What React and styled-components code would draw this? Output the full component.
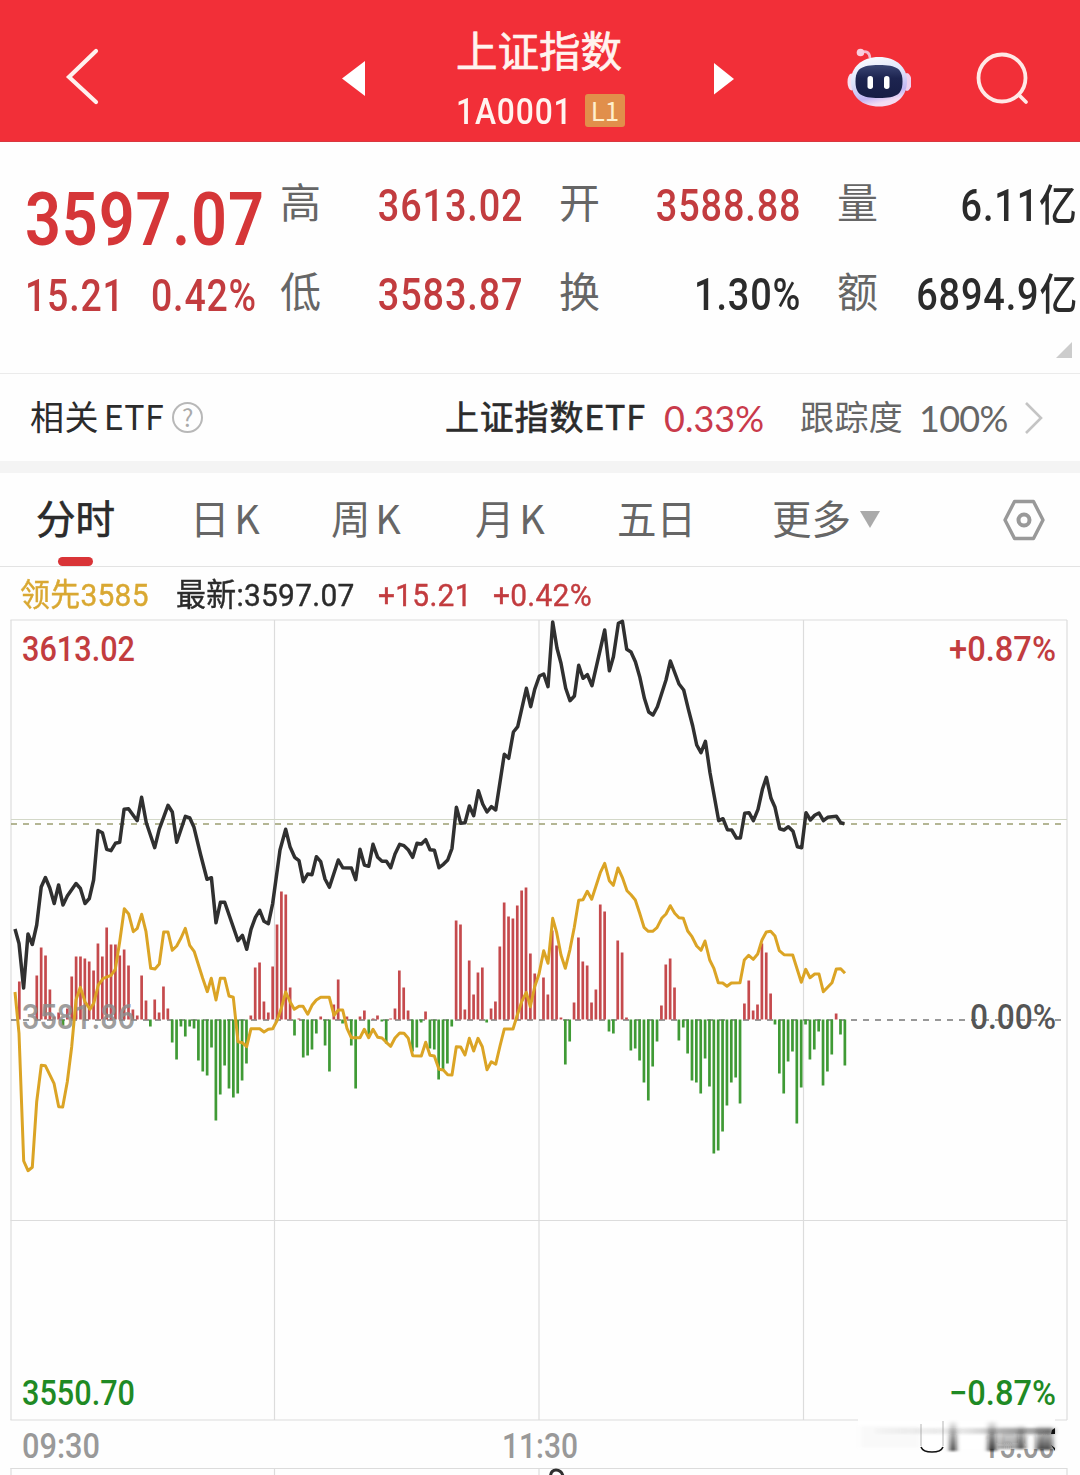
import styled, { createGlobalStyle } from 'styled-components'

const RED = '#c23c3f'
const GREEN = '#1f8a24'

const STATS = [
    { label: '高', value: '3613.02', color: RED },
    { label: '开', value: '3588.88', color: RED },
    { label: '量', value: '6.11亿', color: '#2b2b2b' },
    { label: '低', value: '3583.87', color: RED },
    { label: '换', value: '1.30%', color: '#2b2b2b' },
    { label: '额', value: '6894.9亿', color: '#2b2b2b' },
]

const TABS = ['分时', '日 K', '周 K', '月 K', '五日', '更多']

// index line, x and y in chart units
const PRICE = `15,929 19,943.5 23.6,988 28,934 32.3,944.5 36.7,925 41.2,887 45.4,877.5 49.8,888 54.2,903.5
58.6,885 63,905 67.3,896 76,883.5 80.4,888.5 85,903.5 89.3,898.5 93.6,880 98,830.5 102.4,832.7 106.7,849.3
111,850.7 115.4,843.3 119.7,842.3 124.1,809.3 128.5,808.7 137.2,820.7 141.6,797.3 146.3,822.7 154.7,847.7
159.2,829.3 168,805.3 172.3,812 176.7,842.3 185.4,816.3 189.8,818 194,827.3 200.7,855 207,879.3 211.4,877.7
216,922.7 220.4,902.3 224.7,902.3 238,940.7 242.4,935.3 246.7,949.3 251,929.3 255.4,917.3 259.7,910.3
264,921.3 268.4,923.7 272.7,903.3 280,850 285.7,829.3 290,846.7 294.7,857.3 299,860.7 303.3,881.7 307.7,874
312,874.7 316.4,856.7 320.7,861.7 325,879 329.4,887.3 338.3,860 342.7,867.7 351.4,868 355.7,879.7 360,849.3
364.4,865 368.7,866.3 373,844.3 377.7,857.3 382,861.3 386.4,861.3 390.7,867.7 395,854 399.7,844.3 404,845.7
408.4,850 412.7,857.3 417,843.3 421.4,844 425.7,839.7 430,849.7 434.4,850.3 439,867.7 443.4,864.3 447.7,860
452,848.3 456.4,807.3 460.7,823.3 465,822.7 469.4,806 473.7,815.7 478.4,790.7 482.7,804 487,812 491.4,806.7
495.7,810 504.3,754.3 508.7,758.3 513.4,732 517.7,726.7 526.4,688.3 530.7,706.7 534.7,689.3 539.4,676
543.7,674 548,686.7 552.7,622 557,648.3 561,663.3 565.7,688.3 570,700.7 574.4,696 578.7,665.3 583,678.3
587.4,674.7 592,685.7 604.7,630 609.4,670.7 613.4,656.7 618.4,623.3 622.4,621.3 626.7,649.3 631,652
635.4,661.7 639.7,676.7 644.4,698.3 648.7,712 653,715 657.4,706.7 666,680 670.4,661 679,684 683.7,690
688.4,709.3 692.7,726 696.7,745 701,752.7 705.4,741.3 710,772.7 718.7,820.7 723,818.7 727.4,829.7 731.7,830
736.4,838 740.4,838 744.7,813.3 749,812.7 753.4,820.7 758,809.3 762.4,789.3 766.4,777.3 771,798.3 775,807.3
779.7,828.7 784,830 788.4,826.7 793,831.3 797.4,846.7 801.7,847.7 806,812.7 810.4,820 814.7,815.3 819,813
823.4,820.7 827.7,817.3 836.4,816.3 840.7,822.7 844.4,823.7`

const LEAD = `15,992 19,1033.3 23.7,1161 28,1170.7 32.3,1167.3 36.7,1101.7 41.3,1065.3 45.3,1065.7 54,1083.3
58.7,1106.7 62.7,1107 67.3,1081.7 71.7,1046.7 76,1000 80.3,987.3 85,1001.7 90,1009.3 93.7,1003.3 98.3,985
103.3,978.3 111,975.3 115.3,969.3 119.7,941.7 124.3,908.7 128.7,914 133.3,931.7 137.3,928.3 141.7,914.3
146,931.7 150.7,968.3 155,969 159.3,964 163.7,932 168,932 172.3,950.3 176.7,946 181,938 185.3,928.3
189.7,945.3 194.3,951.7 202.7,978.3 207.3,991.7 211.3,978.3 216,1000 220.3,978.3 224.7,978.3 229,996
233.3,997.3 238,1041.7 242.3,1042.7 246.7,1046.7 251,1028.7 259.7,1028.7 264,1032 268.3,1029.3 272.7,1028.7
277,1020.7 281.3,1008.3 285.7,992 290,1001.7 294.3,1009.3 299,1006.3 303,1006.3 307.7,1014.3 312,1005.3
316.3,1000 320.7,997.3 329.3,997.3 334,1015.3 338.3,1010 342.7,1010 347,1028.3 351.3,1037.7 360,1037.7
364.3,1029.3 368.7,1037.7 373,1029.3 377.7,1037.3 382,1038 386.3,1042.3 390.7,1046.3 395,1038 399.7,1033
404,1033.3 408.3,1038.3 412.7,1055.7 421.3,1056 425.7,1042.3 430,1055.3 434.3,1056 439,1069.3 443.3,1070
447.7,1074.7 452,1075 456.3,1046.7 460.7,1047 465,1055 469.3,1038.3 473.7,1051 478,1038.3 482.3,1046.7
487,1069.7 491.3,1061.7 495.7,1064.3 500,1046 504.3,1029 513,1029 517.3,1015 521.7,1001.7 526.3,992.3
530.3,1006.7 534.7,986.7 539,974 543.7,950.7 548,963.3 552.7,918.3 556.7,932.7 561,955 565.3,968.3 570,949.3
574.3,927.3 578.7,900.3 583,899.7 587.3,891.3 591.7,899.3 600.3,872.7 604.7,863.3 609.3,880.7 613.3,885.3
618,868 622.3,877.3 627,890.7 631,894.7 635.3,900 639.7,913.3 644,927.3 648.3,931.3 652.7,931.3 657,927.7
661.7,918.3 666,914 670.3,905.7 674.7,913.3 679,917.7 683.3,918.3 687.7,931 692,936.7 696.7,946 701,950.3
705,941 709.7,960 714,968.7 718.3,982.7 722.7,983 727,986.3 731.3,983 740,982.7 744.3,960 748.7,955.3
753.3,959.3 757.7,954 762,940 766.3,932 770.7,931.3 775,936 779.3,950.7 784,954.7 792.7,955 801.3,982.3
805.7,969.3 810,977.7 814.7,974 819,974 823.3,991.7 832,982.7 836.3,969 840.7,968.7 845,973.3`

// one bar per minute, above or below the zero line
const BARS = [
    0, 38, 0, 0, 0, 44, 72, 64, 30, 3, 7, -6, 11, 43, 63, 63, 61, 58, 49, 76, 63, 92, 75, 75, 64, 70, 54, 10, 4, 44,
    19, -7, 20, 7, 33, 11, -23, -40, -7, -17, -7, -9, -41, -52, -56, -28, -101, -75, -46, -69, -78, -74, -61, -44, 4,
    52, 57, 18, 7, 53, 95, 128, 125, 32, -16, 1, -38, -36, -30, -14, 3, -26, -52, 15, 40, -4, 3, -26, -69, 3, 9, -17,
    1, 4, -2, -24, 1, 11, 49, 32, 9, -32, -28, -3, 8, -29, -30, -60, -51, -44, -7, 99, 95, 10, 59, 25, 47, 52, -3, 11,
    18, 73, 117, 103, 101, 114, 129, 132, 66, 46, 0, 42, 25, 89, 74, 2, -45, -22, 17, 82, 58, 54, 17, 30, 115, 108,
    -12, -14, 79, 67, 2, -31, -29, -41, -63, -81, -47, -22, 14, 55, 61, 32, -21, -8, -34, -61, -63, -74, -39, -67,
    -134, -131, -112, -86, -63, -58, -84, 16, 39, 9, 15, 76, 67, 26, -5, -54, -74, -42, -32, -104, -68, -5, -40, -30,
    -12, -66, -52, -35, 6, -15, -46,
]

const ZERO = 1019.5

const Robot = () => (
    <svg width='64' height='60' viewBox='847 47 64 60'>
        <defs>
            <linearGradient id='shell' x1='0' y1='0' x2='0.3' y2='1'>
                <stop offset='0' stopColor='#fff' />
                <stop offset='0.5' stopColor='#dde4fb' />
                <stop offset='0.85' stopColor='#c3b5f3' />
                <stop offset='1' stopColor='#f3dcf2' />
            </linearGradient>
            <linearGradient id='face' x1='0' y1='0' x2='0' y2='1'>
                <stop offset='0' stopColor='#3a4674' />
                <stop offset='0.4' stopColor='#1d2450' />
                <stop offset='1' stopColor='#171d45' />
            </linearGradient>
        </defs>
        <path d='M861 51.5 C866 49.500 869.500 51 870 57' fill='none' stroke='#f5b9cc' strokeWidth='2.6' />
        <circle cx='860.500' cy='51.500' r='3.800' fill='#f9cddd' />
        <ellipse cx='851.500' cy='81' rx='4' ry='8.500' fill='#f7dff0' />
        <ellipse cx='907' cy='81' rx='4.500' ry='9' fill='#efd0ee' />
        <path d='M879 56 C896 56 907 66 907 80 C907 96 896 105.500 879 105.500 C862 105.500 851 96 851 80 C851 66 862 56 879 56Z' fill='url(#shell)' />
        <path d='M879 64 C897 64 902.500 68 902.500 80.500 C902.500 93 897 97 879 97 C861 97 855.500 93 855.500 80.500 C855.500 68 861 64 879 64Z' fill='url(#face)' />
        <rect x='867.500' y='75' width='5.500' height='13' rx='2.700' fill='#fff' />
        <rect x='884' y='75' width='5.500' height='13' rx='2.700' fill='#fff' />
    </svg>
)

const Chart = () => (
    <ChartSvg viewBox='0 619 1080 856'>
        <defs>
            <filter id='soft' x='-20%' y='-20%' width='140%' height='140%'>
                <feGaussianBlur stdDeviation='2.4 1.2' />
            </filter>
            <linearGradient id='fade' x1='0' y1='0' x2='0' y2='1'>
                <stop offset='0' stopColor='#111' stopOpacity='0' />
                <stop offset='0.5' stopColor='#111' stopOpacity='0.5' />
                <stop offset='1' stopColor='#111' stopOpacity='0.9' />
            </linearGradient>
            <linearGradient id='streak' x1='0' y1='0' x2='1' y2='0'>
                <stop offset='0' stopColor='#555' stopOpacity='0.03' />
                <stop offset='0.5' stopColor='#555' stopOpacity='0.15' />
                <stop offset='1' stopColor='#333' stopOpacity='0.55' />
            </linearGradient>
        </defs>

        <g stroke='#dcdcdc' strokeWidth='1.200' fill='none'>
            <path d='M10.500 620H1067M10.500 1220.500H1067M10.500 1420H1067M10.500 1468.500H1067' />
            <path d='M11 620V1420M274.500 620V1420M539 620V1420M803.500 620V1420M1067 620V1420' />
            <path d='M11 1468V1475M274.500 1468V1475M539 1468V1475M1067 1468V1475' />
        </g>
        <path d='M11 819.500H1067' stroke='#d3d8c8' strokeWidth='1' />
        <path d='M11 824H1067' stroke='#9c9f72' strokeWidth='1.500' strokeDasharray='6 6' />
        <path d={`M11 ${ZERO + 0.5}H1067`} stroke='#777' strokeWidth='1.500' strokeDasharray='6 6' />

        {BARS.map((v, i) => (
            <rect
                key={i}
                x={13.6 + i * 4.368}
                y={v > 0 ? ZERO - v : ZERO}
                width='2.700'
                height={Math.abs(v)}
                fill={v > 0 ? '#c54a4d' : '#3f9a35'}
            />
        ))}

        <Label x='22' y='1029' textLength='113' fill='#8d8d8d' fillOpacity='0.850'>3581.86</Label>
        <polyline points={LEAD} fill='none' stroke='#dba425' strokeWidth='3' strokeLinejoin='round' />
        <polyline points={PRICE} fill='none' stroke='#303030' strokeWidth='3.500' strokeLinejoin='round' />

        <Label x='22' y='661' textLength='113' fill={RED}>3613.02</Label>
        <Label x='949' y='661' textLength='107' fill={RED}>+0.87%</Label>
        <Label x='970' y='1029' textLength='86' fill='#555'>0.00%</Label>
        <Label x='22' y='1405' textLength='113' fill={GREEN}>3550.70</Label>
        <Label x='949' y='1405' textLength='107' fill={GREEN}>−0.87%</Label>
        <Label x='22' y='1458' textLength='78' fill='#999'>09:30</Label>
        <Label x='502' y='1458' textLength='76' fill='#999'>11:30</Label>
        <Label x='983' y='1458' textLength='72' fill='#999'>15:00</Label>

        {/* smudged corner over the last time label */}
        <g>
            <rect x='858' y='1419' width='197' height='30' fill='#fff' fillOpacity='0.920' />
            <g filter='url(#soft)'>
                <rect x='860' y='1426' width='60' height='22' fill='#999' fillOpacity='0.060' />
                <rect x='875' y='1428' width='179' height='6' fill='url(#streak)' />
                <rect x='950' y='1420' width='6' height='31' fill='url(#fade)' />
                <rect x='988' y='1420' width='8' height='31' fill='url(#fade)' />
                <rect x='998' y='1424' width='28' height='25' fill='url(#fade)' opacity='0.450' />
                <rect x='1018' y='1424' width='6' height='25' fill='url(#fade)' opacity='0.700' />
                <rect x='1036' y='1424' width='17' height='26' fill='url(#fade)' opacity='0.850' />
            </g>
            <path d='M921 1424V1446M943 1421V1446' stroke='#777' strokeWidth='1.200' strokeOpacity='0.450' />
            <path d='M921 1447Q923 1452 932 1452Q941 1452 943 1447' fill='none' stroke='#111' strokeWidth='1.600' />
            <path d='M1052 1430L1055 1428V1434H1051ZM1051 1445L1055 1448V1451Z' fill='#111' />
        </g>
        <path d='M550.500 1476Q551 1470 556 1470Q561.500 1470 563 1476' fill='none' stroke='#303030' strokeWidth='3' />
    </ChartSvg>
)

const App = () => {
    return (
        <Page>
            <GlobalStyle />
            <Header>
                <HeadItem $left={65}>
                    <svg width='36' height='60' viewBox='0 0 36 60' fill='none' stroke='#fff1ee' strokeWidth='4.200'>
                        <path d='M31 4L4 30L31 55' transform='translate(0 -1)' strokeLinecap='round' />
                    </svg>
                </HeadItem>
                <HeadItem $left={241}>
                    <svg width='24' height='36' viewBox='0 0 24 36'><path d='M0 18.500L23 1V36Z' fill='#fff' /></svg>
                </HeadItem>
                <TitleBox>
                    <Title>上证指数</Title>
                    <CodeRow>
                        <Code><Num $k={0.87}>1A0001</Num></Code>
                        <Badge>L1</Badge>
                    </CodeRow>
                </TitleBox>
                <HeadItem $left={87}>
                    <svg width='22' height='34' viewBox='0 0 22 34'><path d='M1 2V33.500L21 18Z' fill='#fff' /></svg>
                </HeadItem>
                <HeadItem $left={112}><Robot /></HeadItem>
                <HeadItem $left={63}>
                    <svg width='58' height='56' viewBox='0 0 58 56' fill='none' stroke='#ffe9e6' strokeWidth='3.800'>
                        <circle cx='28' cy='28' r='23.500' />
                        <path d='M45 45L52 52' strokeLinecap='round' />
                    </svg>
                </HeadItem>
            </Header>

            <Quote>
                <PriceBox>
                    <Price><Num $k={0.84}>3597.07</Num></Price>
                    <Change>
                        <Num $k={0.86}>15.21</Num>
                        <Num $k={0.86}>0.42%</Num>
                    </Change>
                </PriceBox>
                <StatGrid>
                    {STATS.map((s) => (
                        <Stat key={s.label}>
                            <StatLabel>{s.label}</StatLabel>
                            <StatValue $color={s.color}><Num $k={0.87} $right>{s.value}</Num></StatValue>
                        </Stat>
                    ))}
                </StatGrid>
                <Corner />
            </Quote>

            <EtfRow>
                <EtfName>相关 ETF</EtfName>
                <Help>?</Help>
                <EtfInfo>
                    <EtfTarget>上证指数ETF</EtfTarget>
                    <EtfRate>0.33%</EtfRate>
                    <EtfTrack>跟踪度</EtfTrack>
                    <EtfFull>100%</EtfFull>
                    <svg width='20' height='34' viewBox='0 0 20 34' fill='none' stroke='#c4c4c4' strokeWidth='2.600'>
                        <path d='M2 2L17 17L2 32' />
                    </svg>
                </EtfInfo>
            </EtfRow>

            <Tabs>
                {TABS.map((t, i) => (
                    <Tab key={t} $active={i === 0}>
                        <TabText>{t}</TabText>
                        {t === '更多' && <Caret />}
                    </Tab>
                ))}
                <svg width='44' height='42' viewBox='0 0 44 42' fill='none' stroke='#999'>
                    <path d='M12.500 2.500H31.500L41 21L31.500 39.500H12.500L3 21Z' strokeWidth='3.400' strokeLinejoin='round' />
                    <circle cx='22' cy='21' r='5.500' strokeWidth='4' />
                </svg>
            </Tabs>

            <Legend>
                <LegendItem $color='#d9a832'>领先3585</LegendItem>
                <LegendItem $color='#2b2b2b'>最新:3597.07</LegendItem>
                <LegendItem $color={RED}>+15.21</LegendItem>
                <LegendItem $color={RED}>+0.42%</LegendItem>
            </Legend>
            <Chart />
        </Page>
    )
}

// Label keeps its glyphs inside the given textLength
const Label = ({ children, ...props }) => (
    <LabelText lengthAdjust='spacingAndGlyphs' {...props}>{children}</LabelText>
)

export default App

const GlobalStyle = createGlobalStyle`
    * {
        box-sizing: border-box;
    }
    body {
        margin: 0;
        background: #fff;
        font-family: Roboto, 'Noto Sans CJK SC', sans-serif;
    }
`

const Page = styled.div`
    width: 1080px;
    height: 1475px;
    overflow: hidden;
    background: #fefefe;
`

const Num = styled.span`
    display: inline-block;
    white-space: nowrap;
    transform: scaleX(${(p) => p.$k});
    transform-origin: ${(p) => (p.$right ? 'right' : 'left')} center;
`

const Header = styled.header`
    display: flex;
    align-items: center;
    height: 142px;
    padding-top: 14px;
    background: #f22f38;
    border-bottom: 1px solid #d9383f;
`

const HeadItem = styled.div`
    display: flex;
    margin-left: ${(p) => p.$left}px;
`

const TitleBox = styled.div`
    width: 170px;
    margin-left: 90px;
    color: #fff3ef;
`

const Title = styled.div`
    height: 50px;
    font: 41.5px/40px 'Noto Sans CJK SC', sans-serif;
    -webkit-text-stroke: 0.7px;
    white-space: nowrap;
`

const CodeRow = styled.div`
    display: flex;
    align-items: center;
    height: 48px;
    padding-top: 16px;
`

const Code = styled.div`
    width: 129px;
    padding-top: 2px;
    font-size: 36.5px;
    font-weight: 500;
    line-height: 36px;
    letter-spacing: 1px;
`

const Badge = styled.div`
    width: 40px;
    height: 33px;
    border-radius: 3px;
    background: #e18f4b;
    color: #fff0cd;
    font: 26px/31px 'Noto Sans CJK SC', sans-serif;
    text-align: center;
`

const Quote = styled.section`
    position: relative;
    display: flex;
    height: 232px;
    padding: 38px 0 0 25px;
    border-bottom: 1px solid #ebebeb;
`

const PriceBox = styled.div`
    width: 255px;
    color: #d53638;
`

const Price = styled.div`
    height: 78px;
    font-size: 75px;
    font-weight: 600;
    letter-spacing: 1px;
    line-height: 78px;
`

const Change = styled.div`
    display: flex;
    gap: 10px;
    margin-top: 17px;
    color: ${RED};
    font-size: 43.5px;
    font-weight: 500;
    letter-spacing: 1px;
    line-height: 44px;
`

const StatGrid = styled.div`
    display: grid;
    grid-template-columns: 243px 242px 241px;
    column-gap: 36px;
    grid-auto-rows: 89px;
    margin-top: -18px;
`

const Stat = styled.div`
    display: flex;
    justify-content: space-between;
    align-items: flex-start;
    height: 84px;
`

const StatLabel = styled.span`
    margin-top: 8px;
    color: #666;
    font: 41px/60px 'Noto Sans CJK SC', sans-serif;
`

const StatValue = styled.span`
    display: flex;
    justify-content: flex-end;
    width: 160px;
    margin-top: 15px;
    color: ${(p) => p.$color};
    font-size: 43.5px;
    font-weight: 500;
    letter-spacing: 1px;
    line-height: 60px;
`

const Corner = styled.i`
    position: absolute;
    right: 8px;
    bottom: 15px;
    border-bottom: 16px solid #ccc;
    border-left: 16px solid transparent;
`

const EtfRow = styled.section`
    display: flex;
    align-items: center;
    height: 99px;
    padding: 0 36px 0 30px;
    border-bottom: 12px solid #f4f4f4;
    font: 34px/50px 'Noto Sans CJK SC', sans-serif;
    white-space: nowrap;
`

const EtfName = styled.span`
    width: 143px;
    padding-bottom: 3px;
    color: #2b2b2b;
    letter-spacing: 0.4px;
    word-spacing: -3px;
`

const Help = styled.span`
    width: 31px;
    height: 31px;
    border: 2px solid #b8b8b8;
    border-radius: 50%;
    color: #aaa;
    font-size: 24px;
    line-height: 25px;
    text-align: center;
`

const EtfInfo = styled.div`
    display: flex;
    align-items: center;
    margin-left: 242px;
`

const EtfTarget = styled.span`
    width: 219px;
    padding-bottom: 3px;
    color: #2b2b2b;
    letter-spacing: 0.8px;
    -webkit-text-stroke: 0.6px;
`

const EtfRate = styled.span`
    width: 136px;
    color: #c93a4b;
    font-family: Lato, sans-serif;
    font-size: 36px;
`

const EtfTrack = styled.span`
    width: 119px;
    padding-bottom: 3px;
    color: #666;
    letter-spacing: 0.4px;
`

const EtfFull = styled.span`
    width: 105px;
    color: #666;
    font-family: Lato, sans-serif;
    font-size: 36px;
    letter-spacing: -0.7px;
`

const Tabs = styled.nav`
    display: grid;
    grid-template-columns: 154px 141px 144px 142px 155px 230px auto;
    align-items: center;
    height: 94px;
    padding-left: 36px;
    border-bottom: 1px solid #e3e3e3;
`

const Tab = styled.div`
    position: relative;
    display: flex;
    align-items: center;
    height: 93px;
    color: ${(p) => (p.$active ? '#2b2b2b' : '#666')};
    font: 39.5px/60px 'Noto Sans CJK SC', sans-serif;
    -webkit-text-stroke: ${(p) => (p.$active ? '0.7px' : '0')};
    white-space: pre;
    word-spacing: -4px;
    &::after {
        content: '';
        display: ${(p) => (p.$active ? 'block' : 'none')};
        position: absolute;
        left: 22px;
        bottom: 0;
        width: 35px;
        height: 9px;
        border-radius: 5px;
        background: #d93437;
    }
`

const TabText = styled.span`
    padding-bottom: 6px;
`

const Caret = styled.i`
    margin: 0 0 0 9px;
    border-top: 17px solid #aaa;
    border-left: 10px solid transparent;
    border-right: 10px solid transparent;
`

const Legend = styled.div`
    display: grid;
    grid-template-columns: 156px 202px 115px 120px;
    align-items: center;
    height: 52px;
    padding: 4px 0 0 20px;
`

const LegendItem = styled.span`
    color: ${(p) => p.$color};
    font-size: 32px;
    line-height: 44px;
    white-space: nowrap;
    -webkit-text-stroke: 0.4px;
    letter-spacing: 0.3px;
    transform: scaleX(0.935);
    transform-origin: left center;
`

const ChartSvg = styled.svg`
    display: block;
    width: 1080px;
    height: 856px;
`

const LabelText = styled.text`
    font-family: Roboto, sans-serif;
    font-size: 34.5px;
    font-weight: 500;
`
